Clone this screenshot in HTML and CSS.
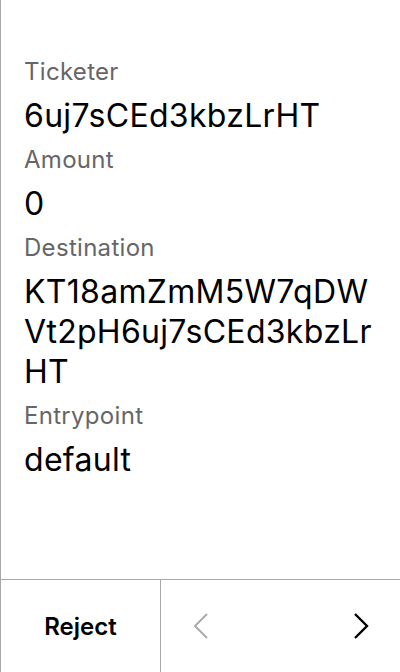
FILE: index.html
```html
<!DOCTYPE html>
<html>
<head>
<meta charset="utf-8">
<link rel="stylesheet" href="styles.css">
</head>
<body>
<div class="screen">
  <div class="content">
    <div class="label">Ticketer</div>
    <div class="value">6uj7sCEd3kbzLrHT</div>
    <div class="label">Amount</div>
    <div class="value">0</div>
    <div class="label">Destination</div>
    <div class="value">KT18amZmM5W7qDW<br>Vt2pH6uj7sCEd3kbzLr<br>HT</div>
    <div class="label">Entrypoint</div>
    <div class="value">default</div>
  </div>
  <div class="footer">
    <div class="reject">Reject</div>
    <div class="nav">
      <svg class="chev" width="16" height="28" viewBox="0 0 16 28"><path d="M14 2 L2 14 L14 26" fill="none" stroke="#aaaaaa" stroke-width="2"/></svg>
      <svg class="chev" width="16" height="28" viewBox="0 0 16 28"><path d="M2 2 L14 14 L2 26" fill="none" stroke="#000" stroke-width="2.4"/></svg>
    </div>
  </div>
</div>
</body>
</html>
```

FILE: styles.css
```css
html, body {
  margin: 0;
  padding: 0;
  background: #fff;
}
body {
  font-family: Inter, "Noto Sans", sans-serif;
  color: #000;
}
.screen {
  width: 400px;
  height: 672px;
  box-sizing: border-box;
  border-left: 1px solid #a8a8a8;
  display: flex;
  flex-direction: column;
}
.content {
  flex: 1;
  padding: 56px 0 0 23px;
  display: flex;
  flex-direction: column;
  gap: 8px;
}
.label {
  font-size: 24px;
  line-height: 32px;
  letter-spacing: 0.3px;
  color: #666666;
}
.value {
  font-size: 32px;
  line-height: 40px;
  letter-spacing: 0.3px;
  color: #000;
}
.footer {
  height: 92px;
  border-top: 1px solid #a8a8a8;
  display: flex;
}
.reject {
  width: 159px;
  border-right: 1px solid #a8a8a8;
  display: flex;
  align-items: center;
  justify-content: center;
  font-size: 24px;
  font-weight: 600;
}
.nav {
  flex: 1;
  display: flex;
  align-items: center;
  justify-content: space-between;
  padding: 0 31px 0 32px;
}
.chev {
  display: block;
}
```
